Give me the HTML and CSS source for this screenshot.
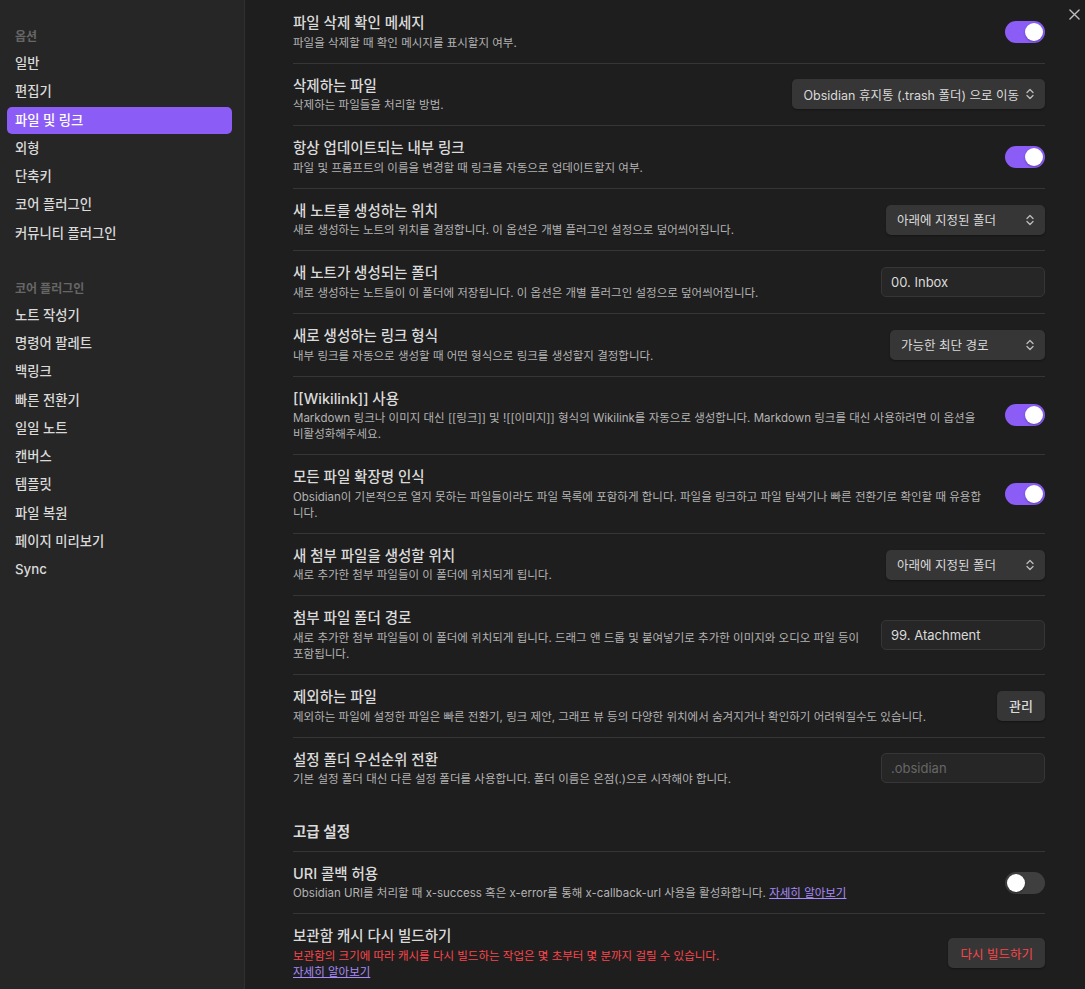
FILE: index.html
```html
<!DOCTYPE html>
<html lang="ko">
<head>
<meta charset="utf-8">
<title>설정</title>
<link rel="stylesheet" href="styles.css">
</head>
<body>
<div class="modal">
  <nav class="sidebar">
    <div class="group">
      <div class="group-title">옵션</div>
      <div class="nav-item">일반</div>
      <div class="nav-item">편집기</div>
      <div class="nav-item active">파일 및 링크</div>
      <div class="nav-item">외형</div>
      <div class="nav-item">단축키</div>
      <div class="nav-item">코어 플러그인</div>
      <div class="nav-item">커뮤니티 플러그인</div>
    </div>
    <div class="group">
      <div class="group-title">코어 플러그인</div>
      <div class="nav-item">노트 작성기</div>
      <div class="nav-item">명령어 팔레트</div>
      <div class="nav-item">백링크</div>
      <div class="nav-item">빠른 전환기</div>
      <div class="nav-item">일일 노트</div>
      <div class="nav-item">캔버스</div>
      <div class="nav-item">템플릿</div>
      <div class="nav-item">파일 복원</div>
      <div class="nav-item">페이지 미리보기</div>
      <div class="nav-item">Sync</div>
    </div>
  </nav>

  <main class="content">
    <div class="setting first">
      <div class="info">
        <div class="name">파일 삭제 확인 메세지</div>
        <div class="desc">파일을 삭제할 때 확인 메시지를 표시할지 여부.</div>
      </div>
      <div class="control"><div class="toggle on"><span class="knob"></span></div></div>
    </div>

    <div class="setting">
      <div class="info">
        <div class="name">삭제하는 파일</div>
        <div class="desc">삭제하는 파일들을 처리할 방법.</div>
      </div>
      <div class="control"><div class="dropdown">Obsidian 휴지통 (.trash 폴더) 으로 이동<svg class="chev" viewBox="0 0 10 14" width="10" height="14"><path d="M2 5.5 L5 2.5 L8 5.5 M2 8.5 L5 11.5 L8 8.5" fill="none" stroke="#bdbdbd" stroke-width="1.3" stroke-linecap="round" stroke-linejoin="round"/></svg></div></div>
    </div>

    <div class="setting">
      <div class="info">
        <div class="name">항상 업데이트되는 내부 링크</div>
        <div class="desc">파일 및 프롬프트의 이름을 변경할 때 링크를 자동으로 업데이트할지 여부.</div>
      </div>
      <div class="control"><div class="toggle on"><span class="knob"></span></div></div>
    </div>

    <div class="setting">
      <div class="info">
        <div class="name">새 노트를 생성하는 위치</div>
        <div class="desc">새로 생성하는 노트의 위치를 결정합니다. 이 옵션은 개별 플러그인 설정으로 덮어씌어집니다.</div>
      </div>
      <div class="control"><div class="dropdown w160">아래에 지정된 폴더<svg class="chev" viewBox="0 0 10 14" width="10" height="14"><path d="M2 5.5 L5 2.5 L8 5.5 M2 8.5 L5 11.5 L8 8.5" fill="none" stroke="#bdbdbd" stroke-width="1.3" stroke-linecap="round" stroke-linejoin="round"/></svg></div></div>
    </div>

    <div class="setting">
      <div class="info">
        <div class="name">새 노트가 생성되는 폴더</div>
        <div class="desc">새로 생성하는 노트들이 이 폴더에 저장됩니다. 이 옵션은 개별 플러그인 설정으로 덮어씌어집니다.</div>
      </div>
      <div class="control"><div class="input">00. Inbox</div></div>
    </div>

    <div class="setting">
      <div class="info">
        <div class="name">새로 생성하는 링크 형식</div>
        <div class="desc">내부 링크를 자동으로 생성할 때 어떤 형식으로 링크를 생성할지 결정합니다.</div>
      </div>
      <div class="control"><div class="dropdown w156">가능한 최단 경로<svg class="chev" viewBox="0 0 10 14" width="10" height="14"><path d="M2 5.5 L5 2.5 L8 5.5 M2 8.5 L5 11.5 L8 8.5" fill="none" stroke="#bdbdbd" stroke-width="1.3" stroke-linecap="round" stroke-linejoin="round"/></svg></div></div>
    </div>

    <div class="setting">
      <div class="info">
        <div class="name">[[Wikilink]] 사용</div>
        <div class="desc">Markdown 링크나 이미지 대신 [[링크]] 및 ![[이미지]] 형식의 Wikilink를 자동으로 생성합니다. Markdown 링크를 대신 사용하려면 이 옵션을 비활성화해주세요.</div>
      </div>
      <div class="control"><div class="toggle on"><span class="knob"></span></div></div>
    </div>

    <div class="setting">
      <div class="info">
        <div class="name">모든 파일 확장명 인식</div>
        <div class="desc">Obsidian이 기본적으로 열지 못하는 파일들이라도 파일 목록에 포함하게 합니다. 파일을 링크하고 파일 탐색기나 빠른 전환기로 확인할 때 유용합니다.</div>
      </div>
      <div class="control"><div class="toggle on"><span class="knob"></span></div></div>
    </div>

    <div class="setting">
      <div class="info">
        <div class="name">새 첨부 파일을 생성할 위치</div>
        <div class="desc">새로 추가한 첨부 파일들이 이 폴더에 위치되게 됩니다.</div>
      </div>
      <div class="control"><div class="dropdown w160">아래에 지정된 폴더<svg class="chev" viewBox="0 0 10 14" width="10" height="14"><path d="M2 5.5 L5 2.5 L8 5.5 M2 8.5 L5 11.5 L8 8.5" fill="none" stroke="#bdbdbd" stroke-width="1.3" stroke-linecap="round" stroke-linejoin="round"/></svg></div></div>
    </div>

    <div class="setting">
      <div class="info">
        <div class="name">첨부 파일 폴더 경로</div>
        <div class="desc">새로 추가한 첨부 파일들이 이 폴더에 위치되게 됩니다. 드래그 앤 드롭 및 붙여넣기로 추가한 이미지와 오디오 파일 등이 포함됩니다.</div>
      </div>
      <div class="control"><div class="input">99. Atachment</div></div>
    </div>

    <div class="setting">
      <div class="info">
        <div class="name">제외하는 파일</div>
        <div class="desc">제외하는 파일에 설정한 파일은 빠른 전환기, 링크 제안, 그래프 뷰 등의 다양한 위치에서 숨겨지거나 확인하기 어려워질수도 있습니다.</div>
      </div>
      <div class="control"><button class="btn">관리</button></div>
    </div>

    <div class="setting">
      <div class="info">
        <div class="name">설정 폴더 우선순위 전환</div>
        <div class="desc">기본 설정 폴더 대신 다른 설정 폴더를 사용합니다. 폴더 이름은 온점(.)으로 시작해야 합니다.</div>
      </div>
      <div class="control"><div class="input placeholder">.obsidian</div></div>
    </div>

    <div class="setting heading">
      <div class="info">
        <div class="name">고급 설정</div>
      </div>
    </div>

    <div class="setting">
      <div class="info">
        <div class="name">URI 콜백 허용</div>
        <div class="desc">Obsidian URI를 처리할 때 x-success 혹은 x-error를 통해 x-callback-url 사용을 활성화합니다. <a class="link">자세히 알아보기</a></div>
      </div>
      <div class="control"><div class="toggle"><span class="knob"></span></div></div>
    </div>

    <div class="setting">
      <div class="info">
        <div class="name">보관함 캐시 다시 빌드하기</div>
        <div class="desc"><span class="warn">보관함의 크기에 따라 캐시를 다시 빌드하는 작업은 몇 초부터 몇 분까지 걸릴 수 있습니다.</span><br><a class="link">자세히 알아보기</a></div>
      </div>
      <div class="control"><button class="btn danger">다시 빌드하기</button></div>
    </div>
  </main>

  <div class="close" aria-label="닫기">
    <svg viewBox="0 0 12 12" width="11" height="11"><path d="M1 1 L11 11 M11 1 L1 11" stroke="#bdbdbd" stroke-width="1.5" stroke-linecap="round"/></svg>
  </div>
</div>
</body>
</html>
```

FILE: styles.css
```css
* { box-sizing: border-box; }

html, body {
  margin: 0;
  padding: 0;
  height: 100%;
  background: #1e1e1e;
  overflow: hidden;
}

body {
  font-family: Inter, "Noto Sans CJK KR", sans-serif;
  color: #dadada;
  -webkit-font-smoothing: antialiased;
}

.modal {
  position: relative;
  display: flex;
  height: 989px;
  width: 1085px;
}

.sidebar {
  width: 245px;
  flex: 0 0 245px;
  background: #262626;
  border-right: 1px solid #303030;
  padding: 27px 12px 0 7px;
  display: flex;
  flex-direction: column;
  gap: 32px;
}

.group {
  display: flex;
  flex-direction: column;
  gap: 1px;
}

.group-title {
  font-size: 12px;
  font-weight: 600;
  color: #666666;
  line-height: 20px;
  padding: 0 8px;
  margin-bottom: 2px;
}

.nav-item {
  font-size: 13.3px;
  font-weight: 500;
  color: #dadada;
  line-height: 19.25px;
  padding: 4px 8px;
  border-radius: 5px;
}

.nav-item.active {
  background: #8b5cf6;
  color: #ffffff;
}

.content {
  flex: 1;
  padding: 0 40px 0 48px;
  display: flex;
  flex-direction: column;
}

.setting {
  display: flex;
  align-items: center;
  padding: 12px 0;
  border-top: 1px solid #363636;
}

.setting.first {
  border-top: none;
  padding-top: 13px;
}

.info {
  flex: 1;
  min-width: 0;
  padding-right: 16px;
}

.name {
  font-size: 14.5px;
  font-weight: 500;
  line-height: 19.6px;
  color: #dadada;
}

.desc {
  font-size: 11.5px;
  line-height: 16px;
  color: #b3b3b3;
  padding-top: 2px;
}

.control {
  flex: 0 0 auto;
  display: flex;
  justify-content: flex-end;
}

.setting.heading {
  border-top: none;
  padding: 23px 0 9px;
}

.setting.heading .name {
  font-weight: 600;
}

.toggle {
  width: 40px;
  height: 22px;
  border-radius: 11px;
  background: #3f3f3f;
  padding: 2px;
  display: flex;
  justify-content: flex-start;
}

.toggle.on {
  background: #8b5cf6;
  justify-content: flex-end;
}

.knob {
  width: 18px;
  height: 18px;
  border-radius: 50%;
  background: #ffffff;
  box-shadow: 0 1px 2px rgba(0,0,0,0.3);
}

.dropdown {
  height: 30px;
  background: #363636;
  border-radius: 5px;
  box-shadow: 0 1px 2px rgba(0,0,0,0.35);
  font-size: 12.5px;
  color: #dadada;
  display: flex;
  align-items: center;
  justify-content: space-between;
  padding: 0 10px 0 11px;
  gap: 6px;
  white-space: nowrap;
}

.dropdown.w160 { width: 159px; }
.dropdown.w156 { width: 155px; }

.chev { flex: 0 0 auto; }

.input {
  width: 164px;
  height: 30px;
  background: #262626;
  border: 1px solid #363636;
  border-radius: 5px;
  font-size: 13px;
  color: #dadada;
  display: flex;
  align-items: center;
  padding: 0 9px;
}

.input.placeholder { color: #666666; }

.btn {
  font-family: inherit;
  font-size: 13px;
  font-weight: 500;
  color: #dadada;
  background: #363636;
  border: none;
  border-radius: 5px;
  height: 30px;
  padding: 0 12px;
  white-space: nowrap;
  box-shadow: 0 1px 2px rgba(0,0,0,0.35);
}

.btn.danger {
  color: #fb464c;
  font-weight: 400;
  font-size: 12.5px;
  padding: 0 12px;
}

.warn { color: #fb464c; }

.link {
  color: #a88bfa;
  text-decoration: underline;
  cursor: pointer;
}

.close {
  position: absolute;
  top: 9px;
  right: 5px;
  width: 11px;
  height: 11px;
  display: flex;
}
```
